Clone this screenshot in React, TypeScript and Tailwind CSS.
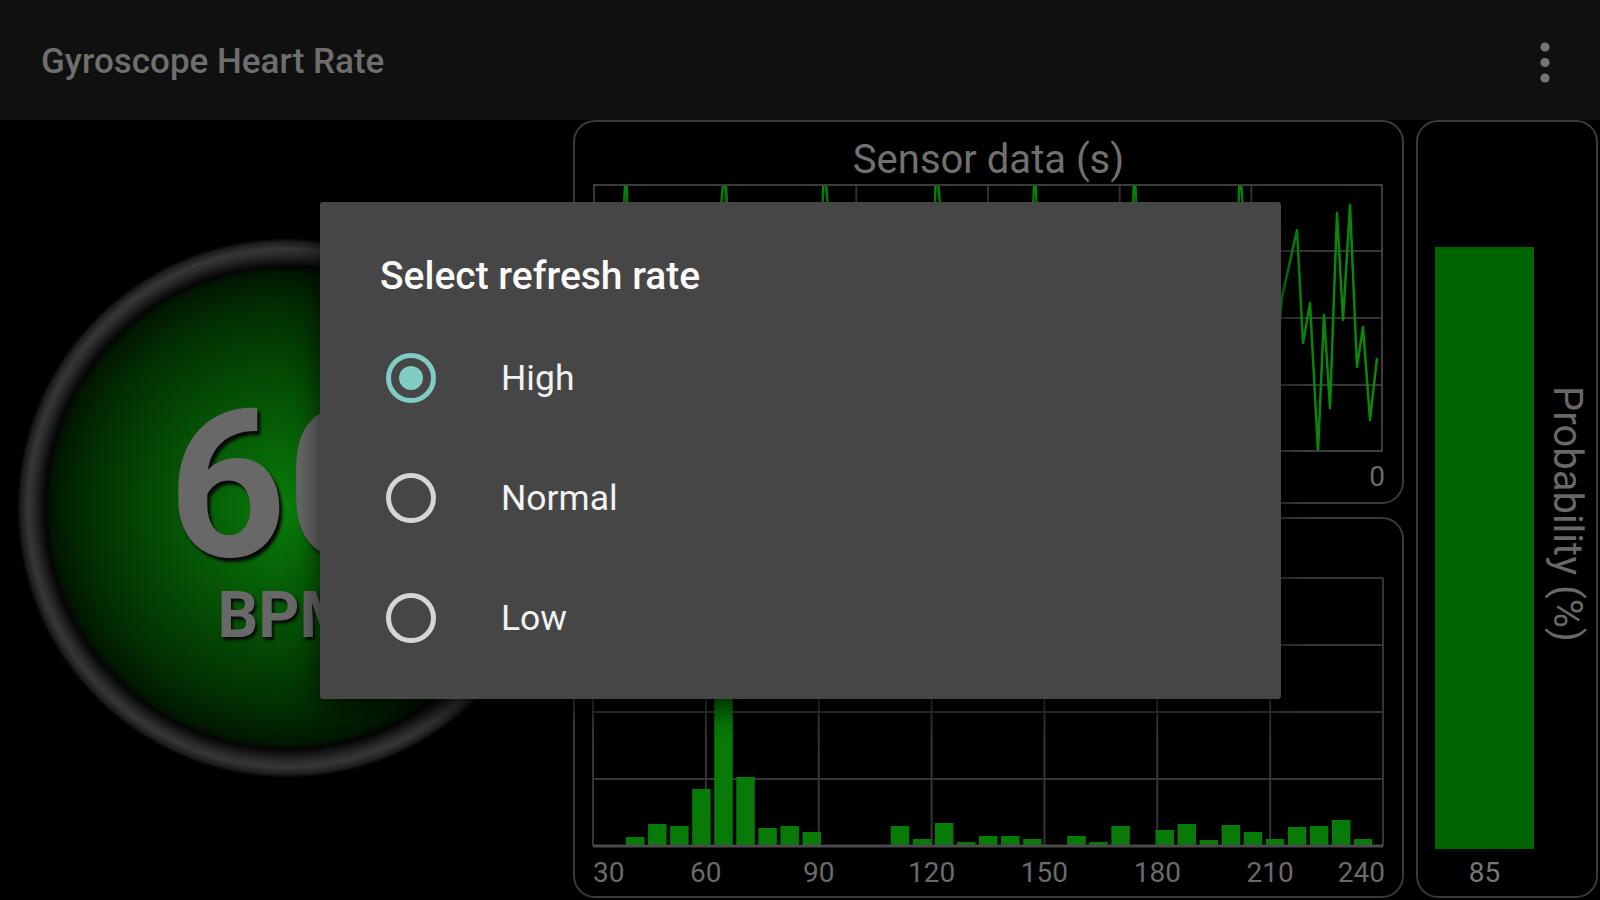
import React from "react";

const font = { fontFamily: "Roboto, 'Liberation Sans', sans-serif" };

const histBars = [9, 22, 20, 57, 250, 69, 18, 20, 14, 0, 0, 0, 20, 7, 23, 4, 10, 10, 7, 0, 10, 4, 20, 0, 16, 22, 6, 21, 14, 7, 19, 20, 26, 7];

const xLabels = ["30", "60", "90", "120", "150", "180", "210", "240"];

const spikes = [33, 132, 233, 344, 444, 544, 644];

function sensorPoints(): string {
  const pts: [number, number][] = [];
  for (let i = 0; i * 6.6 < 686; i++) {
    const x = i * 6.6;
    let y = 50 + (((i * 37 + 11) % 17) / 16) * 190;
    if (spikes.some((s) => Math.abs(s - x) < 3.4)) y = -20;
    pts.push([x, y]);
  }
  const tail: [number, number][] = [
    [689, 113], [704, 46], [710, 159], [717, 119], [725, 268], [731, 131], [737, 224],
    [744, 29], [750, 136], [757, 21], [764, 183], [770, 143], [777, 236], [784, 174],
  ];
  return pts.concat(tail).map(([x, y]) => `${x},${y}`).join(" ");
}

function SensorChart() {
  return (
    <svg width={790} height={268} viewBox="0 0 790 268" className="block">
      {[1, 2, 3, 4, 5].map((i) => (
        <line key={"v" + i} x1={i * 131.67} y1={0} x2={i * 131.67} y2={268} stroke="#353535" strokeWidth={2} />
      ))}
      {[1, 2, 3].map((j) => (
        <line key={"h" + j} x1={0} y1={j * 67} x2={790} y2={j * 67} stroke="#353535" strokeWidth={2} />
      ))}
      <polyline points={sensorPoints()} fill="none" stroke="#0a870a" strokeWidth={2.5} strokeLinejoin="round" />
      <rect x={1} y={1} width={788} height={266} fill="none" stroke="#3d3d3d" strokeWidth={2} />
    </svg>
  );
}

function HistChart() {
  return (
    <svg width={792} height={318} viewBox="0 0 792 318" className="block overflow-visible" style={font}>
      {[0, 1, 2, 3, 4, 5, 6, 7].map((i) => (
        <line key={"v" + i} x1={i * 112.86} y1={0} x2={i * 112.86} y2={268} stroke="#353535" strokeWidth={2} />
      ))}
      {[0, 1, 2, 3].map((j) => (
        <line key={"h" + j} x1={0} y1={j * 67} x2={790} y2={j * 67} stroke="#353535" strokeWidth={2} />
      ))}
      {histBars.map((h, i) =>
        h > 0 ? <rect key={i} x={33 + i * 22.06} y={268 - h} width={18.5} height={h} fill="#077a07" /> : null
      )}
      <line x1={0} y1={268} x2={790} y2={268} stroke="#4a4a4a" strokeWidth={3} />
      {xLabels.map((l, i) => (
        <text
          key={l}
          x={i === 0 ? 0 : i === 7 ? 792 : i * 112.86}
          y={304}
          fontSize={28}
          fill="#6a6a6a"
          textAnchor={i === 0 ? "start" : i === 7 ? "end" : "middle"}
        >
          {l}
        </text>
      ))}
    </svg>
  );
}

function Radio({ checked }: { checked?: boolean }) {
  return (
    <div
      className={`w-[50px] h-[50px] rounded-full border-[5px] flex items-center justify-center ${
        checked ? "border-[#80cbc4]" : "border-[#d6d6d6]"
      }`}
    >
      {checked && <div className="w-[24px] h-[24px] rounded-full bg-[#80cbc4]" />}
    </div>
  );
}

export default function App() {
  return (
    <div className="relative w-[1600px] h-[900px] bg-black overflow-hidden" style={font}>
      {/* top bar */}
      <div className="h-[120px] bg-[#101010] flex items-center justify-between pl-[41px] pr-[50px] pt-[5px]">
        <span className="text-[35px] font-medium text-[#6e6e6e]">Gyroscope Heart Rate</span>
        <svg width={10} height={42} viewBox="0 0 10 42">
          <circle cx={5} cy={5} r={4.6} fill="#747474" />
          <circle cx={5} cy={20.5} r={4.6} fill="#747474" />
          <circle cx={5} cy={36} r={4.6} fill="#747474" />
        </svg>
      </div>

      <div className="flex h-[780px]">
        {/* gauge */}
        <div className="w-[573px] flex items-center justify-center pb-[4px]">
          <div className="w-[540px] h-[540px] rounded-full flex flex-col items-center justify-center pt-[23px] bg-[radial-gradient(circle_closest-side,#0a7c0a_0%,#076607_22%,#044a04_50%,#022e02_75%,#011801_87%,#050505_89.5%,#121212_91%,#2c2c2c_94%,#363636_96%,#1e1e1e_98.5%,#000_100%)]">
            <span className="text-[206px] leading-[190px] font-bold text-[#686868] [text-shadow:3px_4px_3px_#0a0a0a]">60</span>
            <span className="mt-[3px] text-[64px] leading-[64px] font-bold text-[#686868] [text-shadow:2px_3px_3px_#0a0a0a]">BPM</span>
          </div>
        </div>

        {/* charts */}
        <div className="w-[831px] flex flex-col gap-[13px] pb-[2px]">
          <div className="h-[384px] border-2 border-[#3a3a3a] rounded-[22px] flex flex-col">
            <div className="h-[62px] pt-[14px] flex items-center justify-center">
              <span className="text-[40px] leading-none text-[#707070]">Sensor data (s)</span>
            </div>
            <div className="pl-[18px] pr-[19px]">
              <SensorChart />
              <div className="mt-[11px] text-right text-[28px] leading-none text-[#6a6a6a] -mr-[2px]">0</div>
            </div>
          </div>
          <div className="flex-1 border-2 border-[#3a3a3a] rounded-[22px] pt-[59px] pl-[18px]">
            <HistChart />
          </div>
        </div>

        {/* probability */}
        <div className="ml-[12px] w-[182px] mb-[2px] border-2 border-[#3a3a3a] rounded-[22px] flex">
          <div className="w-[116px] pl-[17px] flex flex-col">
            <div className="flex-1 pt-[19px] flex flex-col justify-end">
              <div className="w-[99px] bg-[#006400]" style={{ height: "85%" }} />
            </div>
            <div className="h-[47px] flex items-center justify-center text-[28px] leading-none text-[#777777]">85</div>
          </div>
          <div className="flex-1 flex items-center justify-center pl-[4px] pt-[10px]">
            <span className="[writing-mode:vertical-rl] text-[40px] leading-none text-[#686868]">Probability (%)</span>
          </div>
        </div>
      </div>

      {/* dialog */}
      <div className="absolute left-[320px] top-[202px] w-[961px] h-[497px] bg-[#464646] rounded-[3px] shadow-[0_10px_30px_rgba(0,0,0,0.7)] pt-[50px] px-[60px]">
        <div className="text-[39px] leading-[48px] font-medium text-[#fafafa]">Select refresh rate</div>
        <div className="mt-[18px] flex flex-col">
          {[
            { label: "High", checked: true },
            { label: "Normal" },
            { label: "Low" },
          ].map((o) => (
            <div key={o.label} className="h-[120px] flex items-center pl-[6px]">
              <Radio checked={o.checked} />
              <span className="ml-[65px] text-[35.5px] leading-[40px] text-[#f2f2f2]">{o.label}</span>
            </div>
          ))}
        </div>
      </div>
    </div>
  );
}
